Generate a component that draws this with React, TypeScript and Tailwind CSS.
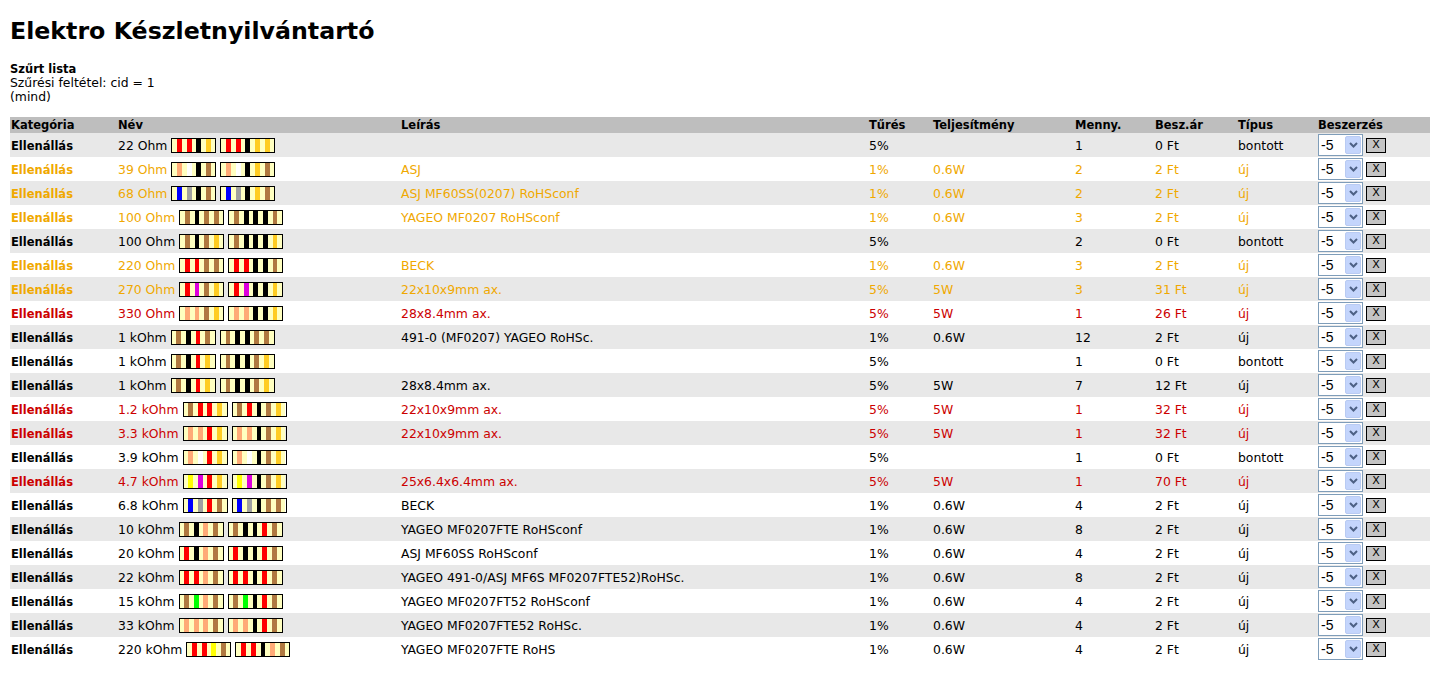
import React from "react"

const BAND = [
  "bg-[#000000]",
  "bg-[#b07840]",
  "bg-[#ff0000]",
  "bg-[#ffaa77]",
  "bg-[#ffff00]",
  "bg-[#00ff00]",
  "bg-[#0000ff]",
  "bg-[#dd00dd]",
  "bg-[#a0a0a0]",
  "bg-[#ffffff]",
]
const GOLD = "bg-[#ffcc22]"
const BODY = "bg-[#ffffc0]"

type Tone = "black" | "orange" | "red"

type Row = {
  ohms: number
  name: string
  desc: string
  tol: string
  power: string
  qty: string
  price: string
  kind: string
  tone: Tone
}

const rows: Row[] = [
  { ohms: 22, name: "22 Ohm", desc: "", tol: "5%", power: "", qty: "1", price: "0 Ft", kind: "bontott", tone: "black" },
  { ohms: 39, name: "39 Ohm", desc: "ASJ", tol: "1%", power: "0.6W", qty: "2", price: "2 Ft", kind: "új", tone: "orange" },
  { ohms: 68, name: "68 Ohm", desc: "ASJ MF60SS(0207) RoHSconf", tol: "1%", power: "0.6W", qty: "2", price: "2 Ft", kind: "új", tone: "orange" },
  { ohms: 100, name: "100 Ohm", desc: "YAGEO MF0207 RoHSconf", tol: "1%", power: "0.6W", qty: "3", price: "2 Ft", kind: "új", tone: "orange" },
  { ohms: 100, name: "100 Ohm", desc: "", tol: "5%", power: "", qty: "2", price: "0 Ft", kind: "bontott", tone: "black" },
  { ohms: 220, name: "220 Ohm", desc: "BECK", tol: "1%", power: "0.6W", qty: "3", price: "2 Ft", kind: "új", tone: "orange" },
  { ohms: 270, name: "270 Ohm", desc: "22x10x9mm ax.", tol: "5%", power: "5W", qty: "3", price: "31 Ft", kind: "új", tone: "orange" },
  { ohms: 330, name: "330 Ohm", desc: "28x8.4mm ax.", tol: "5%", power: "5W", qty: "1", price: "26 Ft", kind: "új", tone: "red" },
  { ohms: 1000, name: "1 kOhm", desc: "491-0 (MF0207) YAGEO RoHSc.", tol: "1%", power: "0.6W", qty: "12", price: "2 Ft", kind: "új", tone: "black" },
  { ohms: 1000, name: "1 kOhm", desc: "", tol: "5%", power: "", qty: "1", price: "0 Ft", kind: "bontott", tone: "black" },
  { ohms: 1000, name: "1 kOhm", desc: "28x8.4mm ax.", tol: "5%", power: "5W", qty: "7", price: "12 Ft", kind: "új", tone: "black" },
  { ohms: 1200, name: "1.2 kOhm", desc: "22x10x9mm ax.", tol: "5%", power: "5W", qty: "1", price: "32 Ft", kind: "új", tone: "red" },
  { ohms: 3300, name: "3.3 kOhm", desc: "22x10x9mm ax.", tol: "5%", power: "5W", qty: "1", price: "32 Ft", kind: "új", tone: "red" },
  { ohms: 3900, name: "3.9 kOhm", desc: "", tol: "5%", power: "", qty: "1", price: "0 Ft", kind: "bontott", tone: "black" },
  { ohms: 4700, name: "4.7 kOhm", desc: "25x6.4x6.4mm ax.", tol: "5%", power: "5W", qty: "1", price: "70 Ft", kind: "új", tone: "red" },
  { ohms: 6800, name: "6.8 kOhm", desc: "BECK", tol: "1%", power: "0.6W", qty: "4", price: "2 Ft", kind: "új", tone: "black" },
  { ohms: 10000, name: "10 kOhm", desc: "YAGEO MF0207FTE RoHSconf", tol: "1%", power: "0.6W", qty: "8", price: "2 Ft", kind: "új", tone: "black" },
  { ohms: 20000, name: "20 kOhm", desc: "ASJ MF60SS RoHSconf", tol: "1%", power: "0.6W", qty: "4", price: "2 Ft", kind: "új", tone: "black" },
  { ohms: 22000, name: "22 kOhm", desc: "YAGEO 491-0/ASJ MF6S MF0207FTE52)RoHSc.", tol: "1%", power: "0.6W", qty: "8", price: "2 Ft", kind: "új", tone: "black" },
  { ohms: 15000, name: "15 kOhm", desc: "YAGEO MF0207FT52 RoHSconf", tol: "1%", power: "0.6W", qty: "4", price: "2 Ft", kind: "új", tone: "black" },
  { ohms: 33000, name: "33 kOhm", desc: "YAGEO MF0207FTE52 RoHSc.", tol: "1%", power: "0.6W", qty: "4", price: "2 Ft", kind: "új", tone: "black" },
  { ohms: 220000, name: "220 kOhm", desc: "YAGEO MF0207FTE RoHS", tol: "1%", power: "0.6W", qty: "4", price: "2 Ft", kind: "új", tone: "black" },
]

const toneClass: Record<Tone, string> = {
  black: "text-black",
  orange: "text-[#f0a800]",
  red: "text-[#cc0000]",
}

// colour code: digits, multiplier, tolerance
function bandsFor(ohms: number, tol: string, five: boolean) {
  const s = String(ohms)
  const n = five ? 3 : 2
  const digits = (s + "000").slice(0, n).split("").map(Number)
  const mult = s.length - n
  const out = digits.map((d) => BAND[d])
  out.push(mult < 0 ? GOLD : BAND[mult])
  out.push(tol === "5%" ? GOLD : BAND[1])
  return out
}

function Resistor({ ohms, tol, five }: { ohms: number; tol: string; five?: boolean }) {
  const bands = bandsFor(ohms, tol, !!five)
  const segs: string[] = [BODY]
  bands.forEach((b) => segs.push(b, BODY))
  return (
    <span className={`flex h-[15px] border border-black mb-[1px] shrink-0 ${five ? "w-[55px]" : "w-[45px]"}`}>
      {segs.map((c, i) => (
        <span key={i} className={`flex-1 ${c}`} />
      ))}
    </span>
  )
}

function Picker() {
  return (
    <div className="flex items-center gap-[3px]">
      <div className="flex h-[22px] w-[45px] items-center justify-between border border-[#7f9db9] bg-white pl-[2px] pr-[1px] text-black">
        <span className="font-['Liberation_Sans',sans-serif] text-[14px] leading-[16px]">-5</span>
        <span className="flex h-[18px] w-[16px] items-center justify-center rounded-[2px] border border-[#b9cbf3] bg-[#c4d5fc]">
          <svg width="9" height="6" viewBox="0 0 9 6">
            <path d="M1 1 L4.5 4.5 L8 1" fill="none" stroke="#4d6185" strokeWidth="2" />
          </svg>
        </span>
      </div>
      <div className="flex h-[15px] w-[20px] items-center justify-center border border-black bg-[#c4c4c4] text-[11px] leading-[12px] text-black">
        X
      </div>
    </div>
  )
}

const heads = ["Kategória", "Név", "Leírás", "Tűrés", "Teljesítmény", "Menny.", "Besz.ár", "Típus", "Beszerzés"]
const widths = ["w-[107px]", "w-[283px]", "w-[468px]", "w-[64px]", "w-[142px]", "w-[80px]", "w-[83px]", "w-[80px]", "w-[113px]"]

export default function App() {
  return (
    <div className="min-h-screen bg-white px-[10px] pt-[17px] font-['DejaVu_Sans',sans-serif] text-black">
      <h1 className="text-[23.7px] font-bold leading-[28px]">Elektro Készletnyilvántartó</h1>

      <div className="mt-[17px] text-[12.4px] leading-[14px]">
        <div className="text-[11.5px] font-bold">Szűrt lista</div>
        <div>Szűrési feltétel: cid = 1</div>
        <div>(mind)</div>
      </div>

      <table className="mt-[13px] w-[1420px] table-fixed border-collapse">
        <colgroup>
          {widths.map((w, i) => (
            <col key={i} className={w} />
          ))}
        </colgroup>
        <thead>
          <tr className="bg-[#bebebe]">
            {heads.map((h) => (
              <th key={h} className="h-[16px] p-0 pl-[1px] pt-[1px] text-left text-[11.5px] font-bold leading-[15px]">
                {h}
              </th>
            ))}
          </tr>
        </thead>
        <tbody className="text-[12.4px] leading-[14px]">
          {rows.map((r, i) => (
            <tr key={i} className={`${i % 2 === 0 ? "bg-[#e8e8e8]" : "bg-white"} ${toneClass[r.tone]}`}>
              <td className="h-[24px] p-0 pl-[1px] pt-[2px] text-[11.5px] font-bold">Ellenállás</td>
              <td className="h-[24px] p-0 pl-[1px] pt-[2px]">
                <div className="flex items-center gap-[4px] whitespace-nowrap">
                  <span>{r.name}</span>
                  <Resistor ohms={r.ohms} tol={r.tol} />
                  <Resistor ohms={r.ohms} tol={r.tol} five />
                </div>
              </td>
              <td className="h-[24px] p-0 pl-[1px] pt-[2px] whitespace-nowrap">{r.desc}</td>
              <td className="h-[24px] p-0 pl-[1px] pt-[2px]">{r.tol}</td>
              <td className="h-[24px] p-0 pl-[1px] pt-[2px]">{r.power}</td>
              <td className="h-[24px] p-0 pl-[1px] pt-[2px]">{r.qty}</td>
              <td className="h-[24px] p-0 pl-[1px] pt-[2px]">{r.price}</td>
              <td className="h-[24px] p-0 pl-[1px] pt-[2px]">{r.kind}</td>
              <td className="h-[24px] p-0 pl-[1px]">
                <Picker />
              </td>
            </tr>
          ))}
        </tbody>
      </table>
    </div>
  )
}
